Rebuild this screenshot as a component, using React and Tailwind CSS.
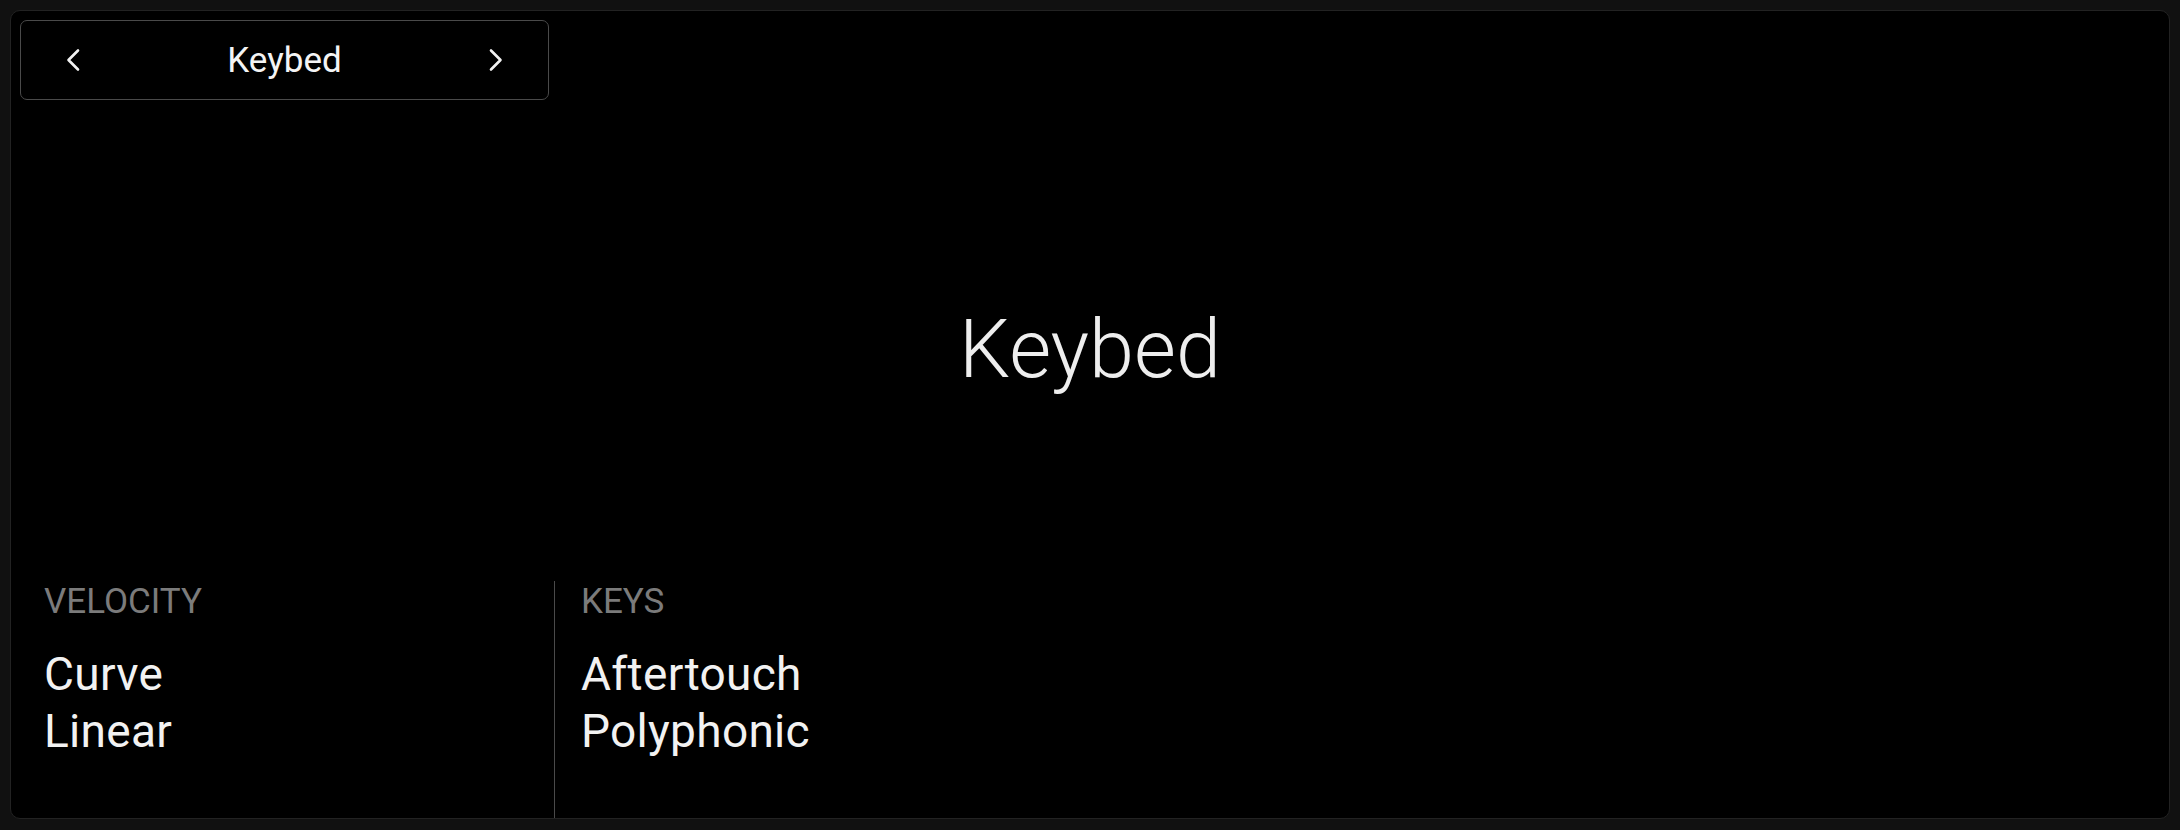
export default function App() {
  const chev = (dir) => (
    <svg width="14" height="24" viewBox="0 0 14 24" fill="none" stroke="#f2f2f2" strokeWidth="2.6" strokeLinecap="round" strokeLinejoin="round">
      {dir === "left" ? <path d="M12 2.5 L2.5 12 L12 21.5" /> : <path d="M2 2.5 L11.5 12 L2 21.5" />}
    </svg>
  );
  return (
    <div className="w-[2180px] h-[830px] bg-[#111111] pt-[10px] pl-[10px]" style={{ fontFamily: "Roboto, 'Noto Sans', sans-serif" }}>
      <div className="w-[2160px] h-[809px] bg-black border border-[#222222] rounded-[10px] flex flex-col">
        <div className="pt-[9px] pl-[9px]">
          <div className="w-[529px] h-[80px] border border-[#4a4a4a] rounded-[7px] flex items-center justify-between px-[45px]">
            {chev("left")}
            <span className="text-[35px] leading-none text-[#f4f4f4]">Keybed</span>
            {chev("right")}
          </div>
        </div>
        <div className="flex-1 flex items-center justify-center pt-[19px]">
          <span className="text-[81px] leading-[94px] font-light text-[#eeeeee]">Keybed</span>
        </div>
        <div className="h-[237px] flex">
          <div className="w-[543px] pl-[33px]">
            <div className="text-[35px] leading-[41px] text-[#7b7b7b]">VELOCITY</div>
            <div className="mt-[24px] text-[46px] leading-[57px] tracking-[0.3px] text-[#f2f2f2]">
              <div>Curve</div>
              <div>Linear</div>
            </div>
          </div>
          <div className="w-px bg-[#4a4a4a]" />
          <div className="pl-[26px]">
            <div className="text-[35px] leading-[41px] text-[#7b7b7b]">KEYS</div>
            <div className="mt-[24px] text-[46px] leading-[57px] tracking-[0.3px] text-[#f2f2f2]">
              <div>Aftertouch</div>
              <div>Polyphonic</div>
            </div>
          </div>
        </div>
      </div>
    </div>
  );
}
